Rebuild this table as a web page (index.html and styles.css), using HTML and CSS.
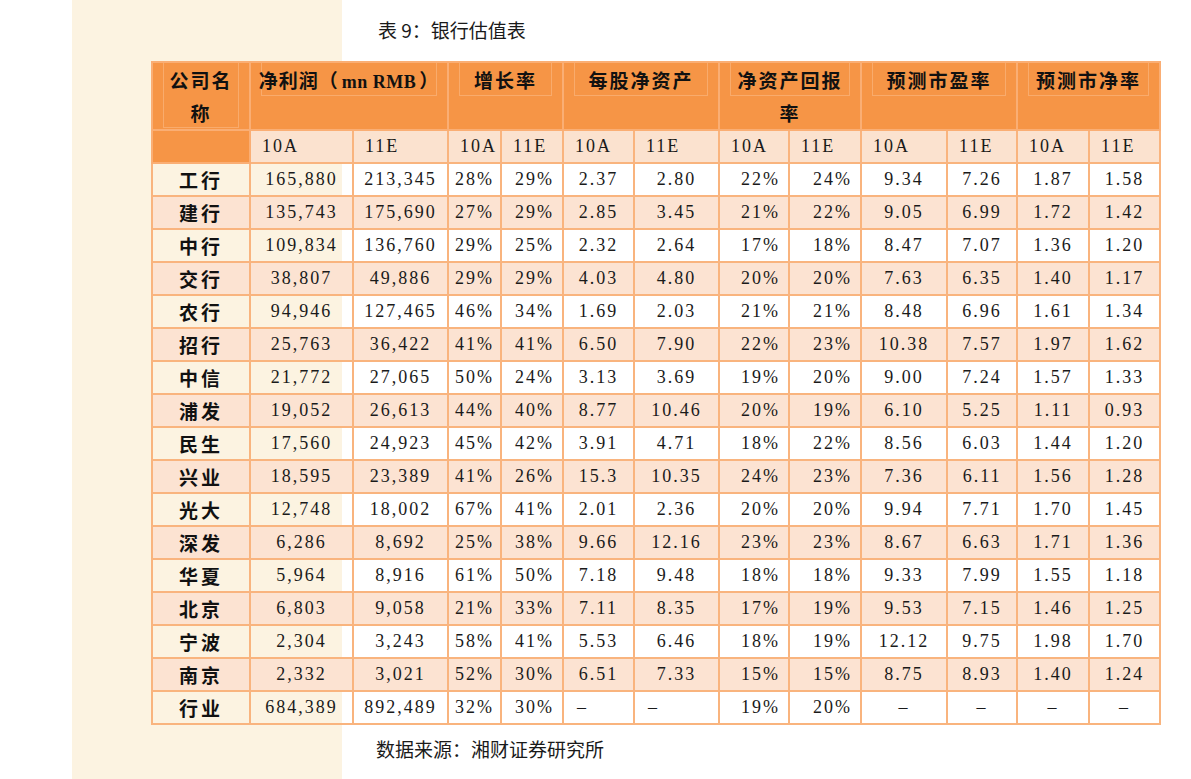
FILE: index.html
```html
<!DOCTYPE html>
<html lang="zh">
<head>
<meta charset="utf-8">
<title>表 9：银行估值表</title>
<link rel="stylesheet" href="styles.css">
</head>
<body>
<div class="page">
  <div class="title">表 9：银行估值表</div>
  <table class="val">
    <colgroup>
      <col style="width:98px"><col style="width:103px"><col style="width:95px"><col style="width:53px"><col style="width:62px"><col style="width:71px"><col style="width:85px"><col style="width:70px"><col style="width:72px"><col style="width:86px"><col style="width:70px"><col style="width:72px"><col style="width:71px">
    </colgroup>
    <thead>
      <tr class="hd">
        <th><span class="hin">公司名称</span></th>
        <th colspan="2"><span class="hin nw">净利润（<span class="lat">mn RMB</span>）</span></th>
        <th colspan="2"><span class="hin">增长率</span></th>
        <th colspan="2"><span class="hin">每股净资产</span></th>
        <th colspan="2"><span class="hin">净资产回报率</span></th>
        <th colspan="2"><span class="hin">预测市盈率</span></th>
        <th colspan="2"><span class="hin">预测市净率</span></th>
      </tr>
      <tr class="sub">
        <th class="blank"></th>
        <th>10A</th><th>11E</th>
        <th>10A</th><th>11E</th>
        <th>10A</th><th>11E</th>
        <th>10A</th><th>11E</th>
        <th>10A</th><th>11E</th>
        <th>10A</th><th>11E</th>
      </tr>
    </thead>
    <tbody>
      <tr><td class="nm">工行</td><td>165,880</td><td>213,345</td><td>28%</td><td class="r">29%</td><td>2.37</td><td>2.80</td><td class="r">22%</td><td class="r">24%</td><td>9.34</td><td>7.26</td><td>1.87</td><td>1.58</td></tr>
      <tr><td class="nm">建行</td><td>135,743</td><td>175,690</td><td>27%</td><td class="r">29%</td><td>2.85</td><td>3.45</td><td class="r">21%</td><td class="r">22%</td><td>9.05</td><td>6.99</td><td>1.72</td><td>1.42</td></tr>
      <tr><td class="nm">中行</td><td>109,834</td><td>136,760</td><td>29%</td><td class="r">25%</td><td>2.32</td><td>2.64</td><td class="r">17%</td><td class="r">18%</td><td>8.47</td><td>7.07</td><td>1.36</td><td>1.20</td></tr>
      <tr><td class="nm">交行</td><td>38,807</td><td>49,886</td><td>29%</td><td class="r">29%</td><td>4.03</td><td>4.80</td><td class="r">20%</td><td class="r">20%</td><td>7.63</td><td>6.35</td><td>1.40</td><td>1.17</td></tr>
      <tr><td class="nm">农行</td><td>94,946</td><td>127,465</td><td>46%</td><td class="r">34%</td><td>1.69</td><td>2.03</td><td class="r">21%</td><td class="r">21%</td><td>8.48</td><td>6.96</td><td>1.61</td><td>1.34</td></tr>
      <tr><td class="nm">招行</td><td>25,763</td><td>36,422</td><td>41%</td><td class="r">41%</td><td>6.50</td><td>7.90</td><td class="r">22%</td><td class="r">23%</td><td>10.38</td><td>7.57</td><td>1.97</td><td>1.62</td></tr>
      <tr><td class="nm">中信</td><td>21,772</td><td>27,065</td><td>50%</td><td class="r">24%</td><td>3.13</td><td>3.69</td><td class="r">19%</td><td class="r">20%</td><td>9.00</td><td>7.24</td><td>1.57</td><td>1.33</td></tr>
      <tr><td class="nm">浦发</td><td>19,052</td><td>26,613</td><td>44%</td><td class="r">40%</td><td>8.77</td><td>10.46</td><td class="r">20%</td><td class="r">19%</td><td>6.10</td><td>5.25</td><td>1.11</td><td>0.93</td></tr>
      <tr><td class="nm">民生</td><td>17,560</td><td>24,923</td><td>45%</td><td class="r">42%</td><td>3.91</td><td>4.71</td><td class="r">18%</td><td class="r">22%</td><td>8.56</td><td>6.03</td><td>1.44</td><td>1.20</td></tr>
      <tr><td class="nm">兴业</td><td>18,595</td><td>23,389</td><td>41%</td><td class="r">26%</td><td>15.3</td><td>10.35</td><td class="r">24%</td><td class="r">23%</td><td>7.36</td><td>6.11</td><td>1.56</td><td>1.28</td></tr>
      <tr><td class="nm">光大</td><td>12,748</td><td>18,002</td><td>67%</td><td class="r">41%</td><td>2.01</td><td>2.36</td><td class="r">20%</td><td class="r">20%</td><td>9.94</td><td>7.71</td><td>1.70</td><td>1.45</td></tr>
      <tr><td class="nm">深发</td><td>6,286</td><td>8,692</td><td>25%</td><td class="r">38%</td><td>9.66</td><td>12.16</td><td class="r">23%</td><td class="r">23%</td><td>8.67</td><td>6.63</td><td>1.71</td><td>1.36</td></tr>
      <tr><td class="nm">华夏</td><td>5,964</td><td>8,916</td><td>61%</td><td class="r">50%</td><td>7.18</td><td>9.48</td><td class="r">18%</td><td class="r">18%</td><td>9.33</td><td>7.99</td><td>1.55</td><td>1.18</td></tr>
      <tr><td class="nm">北京</td><td>6,803</td><td>9,058</td><td>21%</td><td class="r">33%</td><td>7.11</td><td>8.35</td><td class="r">17%</td><td class="r">19%</td><td>9.53</td><td>7.15</td><td>1.46</td><td>1.25</td></tr>
      <tr><td class="nm">宁波</td><td>2,304</td><td>3,243</td><td>58%</td><td class="r">41%</td><td>5.53</td><td>6.46</td><td class="r">18%</td><td class="r">19%</td><td>12.12</td><td>9.75</td><td>1.98</td><td>1.70</td></tr>
      <tr><td class="nm">南京</td><td>2,332</td><td>3,021</td><td>52%</td><td class="r">30%</td><td>6.51</td><td>7.33</td><td class="r">15%</td><td class="r">15%</td><td>8.75</td><td>8.93</td><td>1.40</td><td>1.24</td></tr>
      <tr><td class="nm">行业</td><td>684,389</td><td>892,489</td><td>32%</td><td class="r">30%</td><td class="l">–</td><td class="l">–</td><td class="r">19%</td><td class="r">20%</td><td>–</td><td>–</td><td>–</td><td>–</td></tr>
    </tbody>
  </table>
  <div class="source">数据来源：湘财证券研究所</div>
</div>
</body>
</html>
```
FILE: styles.css
```css
html, body {
  margin: 0;
  padding: 0;
}
body {
  min-height: 779px;
  background: linear-gradient(to right, #ffffff 72px, #fcf3e1 72px, #fcf3e1 342px, #ffffff 342px);
  font-family: "Noto Sans CJK SC", "Noto Sans", sans-serif;
  color: #111;
}
.page {
  display: flex;
  flex-direction: column;
  align-items: flex-start;
}
.title {
  height: 61px;
  line-height: 60px;
  padding-left: 378px;
  font-size: 19px;
  color: #1a1a1a;
}
.val {
  margin-left: 151px;
  width: 1008px;
  table-layout: fixed;
  border-collapse: collapse;
  border: 2px solid #f9b47e;
}
.val th, .val td {
  border: 2px solid #f9b47e;
  padding: 0;
  box-sizing: border-box;
}
.hd th {
  position: relative;
  height: 66px;
  vertical-align: top;
  background: #f69546;
  border-color: #faae74;
  font-family: "Noto Sans CJK SC", sans-serif;
  font-weight: 700;
  font-size: 19px;
  line-height: 33px;
  letter-spacing: 2px;
  color: #111;
  text-align: center;
}
.hd th::before {
  content: "";
  position: absolute;
  top: 0;
  left: 10px;
  right: 10px;
  height: 32px;
  border-left: 1px solid rgba(252, 190, 140, 0.55);
  border-right: 1px solid rgba(252, 190, 140, 0.55);
  border-bottom: 1px solid rgba(252, 190, 140, 0.55);
}
.hd th:first-child::before {
  height: 64px;
}
.hin {
  position: relative;
  display: block;
  padding: 0 14px;
}
.hin.nw {
  white-space: nowrap;
  padding: 0;
  letter-spacing: 1px;
}
.lat {
  font-family: "Liberation Serif", serif;
  font-weight: 700;
  font-size: 18px;
  letter-spacing: 0.5px;
  padding: 0 3px;
}
.hd th:first-child .hin {
  padding: 0 16px;
}
.sub th {
  height: 33px;
  background: #fbe2cf;
  font-family: "Liberation Serif", serif;
  font-weight: 400;
  font-size: 18px;
  letter-spacing: 2px;
  text-align: left;
  padding-left: 11px;
  color: #1a1a1a;
}
.sub th.blank {
  background: #f69546;
  border-color: #faae74;
}
.val td {
  height: 33px;
  text-align: center;
  font-family: "Liberation Serif", serif;
  font-size: 18px;
  letter-spacing: 2px;
  color: #1a1a1a;
  background: transparent;
}
.val tbody tr:nth-child(even) td {
  background: #fce3d2;
}
.val td.nm {
  font-family: "Noto Sans CJK SC", sans-serif;
  font-weight: 700;
  font-size: 19px;
  letter-spacing: 3px;
  color: #111;
}
.val td.r {
  text-align: right;
  padding-right: 8px;
}
.val td.l {
  text-align: left;
  padding-left: 13px;
}
.source {
  margin-top: 12px;
  padding-left: 376px;
  line-height: 24px;
  font-size: 19px;
  color: #1a1a1a;
}
```
